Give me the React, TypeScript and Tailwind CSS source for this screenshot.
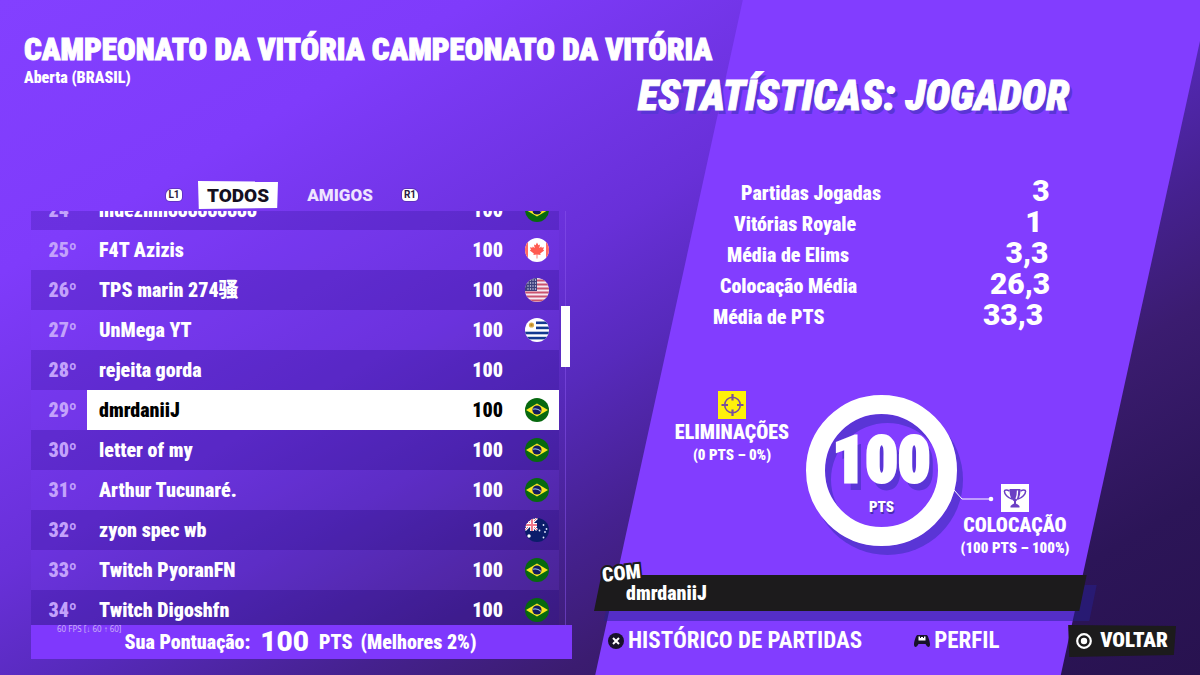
import { useId } from 'react';
import type { CSSProperties, ReactNode } from 'react';

type Country = 'br' | 'ca' | 'us' | 'uy' | 'au';

type Player = {
  rank: number;
  name: string;
  points: number;
  country?: Country;
};

const players: Player[] = [
  { rank: 24, name: 'hidezinhooooooooo', points: 100, country: 'br' },
  { rank: 25, name: 'F4T Azizis', points: 100, country: 'ca' },
  { rank: 26, name: 'TPS marin 274骚', points: 100, country: 'us' },
  { rank: 27, name: 'UnMega YT', points: 100, country: 'uy' },
  { rank: 28, name: 'rejeita gorda', points: 100 },
  { rank: 29, name: 'dmrdaniiJ', points: 100, country: 'br' },
  { rank: 30, name: 'letter of my', points: 100, country: 'br' },
  { rank: 31, name: 'Arthur Tucunaré.', points: 100, country: 'br' },
  { rank: 32, name: 'zyon spec wb', points: 100, country: 'au' },
  { rank: 33, name: 'Twitch PyoranFN', points: 100, country: 'br' },
  { rank: 34, name: 'Twitch Digoshfn', points: 100, country: 'br' },
];

const stats = [
  { label: 'Partidas Jogadas', value: '3' },
  { label: 'Vitórias Royale', value: '1' },
  { label: 'Média de Elims', value: '3,3' },
  { label: 'Colocação Média', value: '26,3' },
  { label: 'Média de PTS', value: '33,3' },
];

const SELECTED_RANK = 29;
const ROW_SLANT = 7;

const flagArt: Record<Country, ReactNode> = {
  br: (
    <>
      <rect width="24" height="24" fill="#07690f" />
      <path d="M1 12 12 5.5 23 12 12 18.5Z" fill="#fbe723" />
      <circle cx="12" cy="12" r="4.6" fill="#131c60" />
      <path d="M7.8 11.2c2.8-.8 5.8-.1 8.2 2.2" stroke="#8fa8d8" strokeWidth="1.1" fill="none" />
    </>
  ),
  ca: (
    <>
      <rect width="24" height="24" fill="#fff" />
      <rect width="3" height="24" fill="#ff6a63" />
      <rect x="21" width="3" height="24" fill="#ff6a63" />
      <path
        d="M12 4.5 10.6 7.3 9 6.5 9.7 10.3 7.8 8.5 7.3 9.7 5 9.3 5.9 11.7 4.8 12.4 8.8 15.5 8.4 17 11.6 16.5V20.5H12.4V16.5L15.6 17 15.2 15.5 19.2 12.4 18.1 11.7 19 9.3 16.7 9.7 16.2 8.5 14.3 10.3 15 6.5 13.4 7.3Z"
        fill="#ff5b50"
      />
    </>
  ),
  us: (
    <>
      <rect width="24" height="24" fill="#f6e9f2" />
      {[0, 4, 8, 12, 16, 20].map((y) => (
        <rect key={y} y={y + 1.5} width="24" height="2" fill="#c9536f" />
      ))}
      <rect width="12" height="13" fill="#3d3f7c" />
      {[2, 5, 8, 11].map((y) =>
        [2, 4.5, 7, 9.5].map((x) => <circle key={`${x}-${y}`} cx={x + 1} cy={y} r="0.7" fill="#dfe3f5" />),
      )}
    </>
  ),
  uy: (
    <>
      <rect width="24" height="24" fill="#fff" />
      <rect x="11" y="3.5" width="13" height="2.6" fill="#143a91" />
      <rect x="11" y="8.6" width="13" height="2.6" fill="#143a91" />
      <rect y="13.7" width="24" height="2.6" fill="#143a91" />
      <rect y="18.8" width="24" height="2.6" fill="#143a91" />
      <circle cx="6.5" cy="7" r="2.6" fill="#d9ab4a" />
      <circle cx="6.5" cy="7" r="1.2" fill="#b98324" />
    </>
  ),
  au: (
    <>
      <rect width="24" height="24" fill="#0b1d6b" />
      <path d="M0 0 12 12M12 0 0 12" stroke="#fff" strokeWidth="2.6" />
      <path d="M0 0 12 12M12 0 0 12" stroke="#ef6f83" strokeWidth="1" />
      <path d="M7 0V13M0 7H12" stroke="#fff" strokeWidth="3.8" />
      <path d="M7 0V13M0 7H12" stroke="#f0788a" strokeWidth="2" />
      <circle cx="4" cy="18" r="1.7" fill="#fff" />
      {[
        [18.5, 7],
        [21.5, 11],
        [14.5, 12.5],
        [20, 14],
        [18.5, 19.5],
      ].map(([x, y]) => (
        <circle key={`${x}-${y}`} cx={x} cy={y} r="0.9" fill="#e6ebff" />
      ))}
    </>
  ),
};

function Flag({ country }: { country: Country }) {
  const id = useId();
  return (
    <svg viewBox="0 0 24 24" className="size-6" aria-hidden="true">
      <clipPath id={id}>
        <circle cx="12" cy="12" r="12" />
      </clipPath>
      <g clipPath={`url(#${id})`}>{flagArt[country]}</g>
    </svg>
  );
}

function PlayerRow({ player }: { player: Player }) {
  const selected = player.rank === SELECTED_RANK;
  const stripe = player.rank % 2 === 0 ? 'bg-[#2a0f90]/25' : 'bg-[#8040ff]/15';
  const cell = selected ? 'bg-white text-black' : '';

  return (
    <tr className={`h-10 text-xl ${stripe}`}>
      <td className="w-14 pr-2.5 text-right text-[#c3a2fb]">{player.rank}º</td>
      <td className={`pl-3 ${cell}`}>{player.name}</td>
      <td className={`w-20 text-right ${cell}`}>{player.points}</td>
      <td className={`w-14 pl-5.5 ${cell}`}>{player.country && <Flag country={player.country} />}</td>
    </tr>
  );
}

function KeyHint({ children, side }: { children: ReactNode; side: 'left' | 'right' }) {
  return (
    <kbd
      className={`w-4 rounded-sm bg-white text-center font-[Roboto,sans-serif] text-[10px] leading-3 font-bold text-[#2b2040] ring-1 ring-[#4a2c8f]/50 ${
        side === 'left' ? 'rounded-tl-md' : 'rounded-tr-md'
      }`}
    >
      {children}
    </kbd>
  );
}

function Leaderboard() {
  return (
    <section className="flex w-[49.5%] flex-col pb-4">
      <header className="pt-8 pl-6 whitespace-nowrap">
        <h1 className="text-[31px] leading-9 [-webkit-text-stroke:1px_white]">
          CAMPEONATO DA VITÓRIA CAMPEONATO DA VITÓRIA
        </h1>
        <p className="text-base leading-5">Aberta (BRASIL)</p>
      </header>

      <div className="mt-23 flex items-center pl-[166px] font-[Roboto,sans-serif]">
        <KeyHint side="left">L1</KeyHint>
        <button className="ml-4 h-7 w-20 bg-white text-center text-[19px] leading-[30px] font-black text-[#15101f] [clip-path:polygon(0_0,100%_2%,99%_96%,1%_100%)]">
          TODOS
        </button>
        <button className="w-[124px] text-center text-[17px] leading-[30px] font-black text-[#eee4ff]">AMIGOS</button>
        <KeyHint side="right">R1</KeyHint>
      </div>

      <div className="relative mt-px ml-[31px] flex min-h-0 flex-1">
        <div className="w-[528px] overflow-hidden">
          {/* scrolled halfway into the first visible row */}
          <table className="-mt-[21px] w-full border-collapse">
            <tbody>
              {players.map((player) => (
                <PlayerRow key={player.rank} player={player} />
              ))}
            </tbody>
          </table>
        </div>
        <div className="relative ml-0.5 w-[9px]">
          <div className="mx-auto h-full w-px bg-[#8a55ee]/50" />
          <div className="absolute inset-x-0 top-[23%] h-[61px] bg-white" />
        </div>
      </div>

      <div className="relative mr-[22px] ml-[31px] flex h-[34px] items-center justify-center bg-[#7f38fd] pr-0.5 text-xl whitespace-nowrap">
        <span>Sua Pontuação:</span>
        <span className="mx-2.5 font-[Roboto,sans-serif] text-[28px]">100</span>
        <span>PTS</span>
        <span className="ml-2">(Melhores 2%)</span>
        <span className="absolute -top-0.5 left-[26px] font-['Noto_Sans',sans-serif] text-[8px] leading-3 font-normal text-[#c8aef5]">
          60 FPS [↓ 60 ↑ 60]
        </span>
      </div>
    </section>
  );
}

function Crosshair() {
  return (
    <svg viewBox="0 0 28 28" className="size-7 bg-[#fff10a]" aria-hidden="true">
      <circle cx="14.5" cy="14" r="7.8" fill="none" stroke="#7a4f9c" strokeWidth="1.6" />
      <path d="M14.5 3v6.500M14.5 18.500v6.500M3.500 14h6.500M19 14h6.500" stroke="#7a4f9c" strokeWidth="2.2" />
    </svg>
  );
}

function Trophy() {
  return (
    <svg viewBox="0 0 28 28" className="size-7 bg-white" aria-hidden="true">
      <path
        d="M8.5 5h11c0 6-1.2 10-4.5 12.2v2.3c1 .9 2.5 1.2 3.5 2.5V23.5h-9V22c1-1.3 2.5-1.6 3.5-2.5v-2.3C9.7 15 8.5 11 8.5 5Z"
        fill="#6b3fc4"
      />
      <path
        d="M8.5 7C6 5.5 3.5 5.7 3.4 7.2 3.3 10 6.8 14 11 15M19.5 7c2.5-1.5 5-1.3 5.1.2.1 2.8-3.4 6.8-7.6 7.8"
        fill="none"
        stroke="#6b3fc4"
        strokeWidth="1.5"
      />
      <path d="M16.5 6.5c0 4-.4 6.5-1.5 8.5" fill="none" stroke="#fff" strokeWidth="1.3" />
    </svg>
  );
}

function Breakdown({ icon, label, detail }: { icon: ReactNode; label: string; detail: string }) {
  return (
    <div className="flex w-29 flex-col items-center whitespace-nowrap">
      {icon}
      <h3 className="text-xl leading-[26px]">{label}</h3>
      <p className="text-[15px] leading-5">{detail}</p>
    </div>
  );
}

function ScoreRing() {
  return (
    <div className="relative mt-1 ml-4 flex size-[151px] flex-col items-center justify-center rounded-full border-[19px] border-white shadow-[6px_9px_0_#5a35d6,inset_6px_9px_0_#5a35d6]">
      <strong className="mt-1 text-[64px] leading-16 font-black [-webkit-text-stroke:3px_white] [text-shadow:5px_8px_0_#5a35d6]">
        100
      </strong>
      <span className="mt-1 text-[15px] leading-5 [text-shadow:1px_2px_0_#4a2bb0]">PTS</span>
      <svg viewBox="0 0 42 14" className="absolute -right-[57px] bottom-6 h-3.5 w-[42px]" aria-hidden="true">
        <path d="M1 1 9 10H38" fill="none" stroke="#fff" strokeWidth="1" />
        <circle cx="38" cy="10" r="2.3" fill="#fff" />
      </svg>
    </div>
  );
}

function CrossButtonIcon() {
  return (
    <svg viewBox="0 0 16 16" className="size-4" aria-hidden="true">
      <circle cx="8" cy="8" r="8" fill="#17122a" />
      <path d="m5 5 6 6M11 5l-6 6" stroke="#fff" strokeWidth="2" />
    </svg>
  );
}

function TouchpadIcon() {
  return (
    <svg viewBox="0 0 16 14" className="h-3.5 w-4" aria-hidden="true">
      <path
        d="M3.5 1h9C14 1 16 7.5 16 10.5c0 3.3-2.7 3.2-4.5-.5h-7C2.700 13.700 0 13.800 0 10.500 0 7.500 2 1 3.500 1Z"
        fill="#17122a"
      />
      <path d="M4.500 2.500h1.500V4h1V3h2v1h1V2.500h1.500V6.500H4.500Z" fill="#fff" />
    </svg>
  );
}

function CircleButtonIcon() {
  return (
    <svg viewBox="0 0 16 16" className="size-4" aria-hidden="true">
      <circle cx="8" cy="8" r="6.8" fill="none" stroke="#fff" strokeWidth="2.2" />
      <circle cx="8" cy="8" r="3.2" fill="#fff" />
    </svg>
  );
}

function PlayerStats() {
  return (
    <section className="flex flex-1 flex-col">
      <h2 className="mt-[72px] ml-11 text-[42px] leading-12 whitespace-nowrap italic [-webkit-text-stroke:1px_white] [text-shadow:3px_4px_0_#5a35d6]">
        ESTATÍSTICAS: JOGADOR
      </h2>

      <dl className="mt-[57px] ml-[119px]">
        {stats.map((stat, i) => {
          const style: CSSProperties = { marginLeft: (stats.length - 1 - i) * ROW_SLANT };
          return (
            <div key={stat.label} className="flex h-[31px] items-center" style={style}>
              <dt className="w-[264px] text-xl">{stat.label}</dt>
              <dd className="-mt-1 w-18 text-center font-[Roboto,sans-serif] text-[30px] leading-[31px]">{stat.value}</dd>
            </div>
          );
        })}
      </dl>

      <div className="mt-[59px] ml-20 flex items-start">
        <Breakdown icon={<Crosshair />} label="ELIMINAÇÕES" detail="(0 PTS – 0%)" />
        <ScoreRing />
        <div className="mt-[93px]">
          <Breakdown icon={<Trophy />} label="COLOCAÇÃO" detail="(100 PTS – 100%)" />
        </div>
      </div>

      <div className="relative mt-auto w-[81.3%]">
        <div className="absolute inset-0 translate-x-2.5 translate-y-2.5 bg-[#262090]/50 [clip-path:polygon(1.5%_0,100%_0,98.5%_100%,0_100%)]" />
        <div className="relative flex h-9 items-center bg-[#1c1b1c] pl-8 text-xl [clip-path:polygon(1.5%_0,100%_0,98.5%_100%,0_100%)]">
          dmrdaniiJ
        </div>
        <span className="absolute -top-3.5 left-2 -rotate-6 text-xl leading-6 [paint-order:stroke_fill] [-webkit-text-stroke:4px_#1c1b1c]">
          COM
        </span>
      </div>

      <nav className="mt-3 mb-4 flex h-9 items-center pl-3.5 whitespace-nowrap">
        <button className="flex items-center gap-1 text-[23px] font-bold">
          <CrossButtonIcon />
          HISTÓRICO DE PARTIDAS
        </button>
        <button className="ml-13 flex items-center gap-1 text-[23px] font-bold">
          <TouchpadIcon />
          PERFIL
        </button>
        <button className="mr-6 ml-auto flex h-8 items-center gap-2 bg-[#1c1b1c] px-2 text-[21px] [clip-path:polygon(0_0,100%_3%,98%_94%,1%_100%)]">
          <CircleButtonIcon />
          VOLTAR
        </button>
      </nav>
    </section>
  );
}

export default function App() {
  return (
    <main className="relative flex h-screen overflow-hidden bg-[linear-gradient(150deg,#8340ff_0%,#7f3bfb_20%,#6830d8_42%,#572abc_52%,#45218f_64%,#3b1c70_73%,#2c1558_87%,#28124f_100%)] font-['Roboto_Condensed','Noto_Sans_CJK_SC',sans-serif] font-black text-white">
      <div className="absolute inset-0 bg-[#823dff] [clip-path:polygon(61.9%_0,100.75%_0,88.4%_100%,49.6%_100%)]" />
      <div className="relative flex w-full">
        <Leaderboard />
        <PlayerStats />
      </div>
    </main>
  );
}
